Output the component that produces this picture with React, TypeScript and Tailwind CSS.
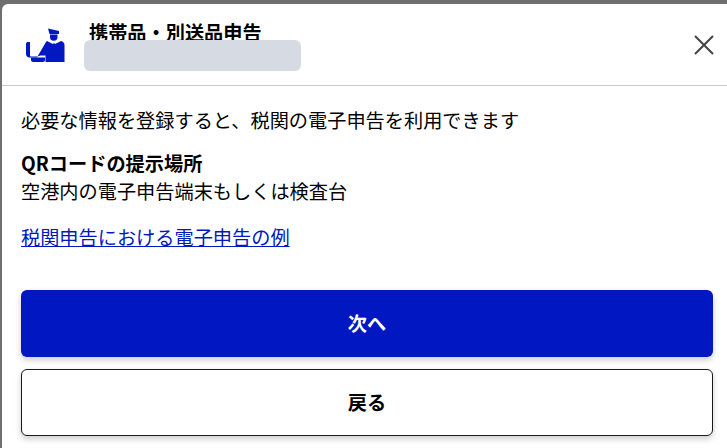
import { X } from 'lucide-react';

const OfficerIcon = () => (
  <svg width="40" height="34" viewBox="0 0 40 34" className="shrink-0" fill="#0017c1">
    <path d="M23 .5l11 2.500v3H24.500z" />
    <path d="M25 6.500h7.500v2.500a3.750 3.750 0 0 1-7.500 0z" />
    <path d="M22 13l6 3 1-1 1 1 6-3c2 .5 3.500 2 3.500 4v17H20.500v-6.500h-5l-3 1L21 14z" />
    <path d="M1 16c0-1 .500-2 1.500-2H5v13c0 1 .500 1.500 1.500 1.500H13L12 29.500H4.500C2.500 29.500 1 28 1 26z" />
    <path d="M6 29.500h14V32c0 1-1 2-2 2H8c-1 0-2-1-2-2z" />
  </svg>
);

export default function App() {
  return (
    <div className="h-[448px] overflow-hidden bg-[#6f6f6f] pl-[2px] pt-[4px] font-['Noto_Sans_CJK_JP','Noto_Sans',sans-serif] text-black">
      <div className="h-full rounded-tl-[6px] bg-white">
        {/* Header */}
        <header className="flex h-[82px] items-center border-b border-[#c8c8c8] pl-[23px] pr-[6px]">
          <OfficerIcon />
          <div className="ml-[24px] flex h-full flex-col pt-[15px]">
            <h1 className="h-[21px] text-[19.2px] font-bold leading-[27px]">携帯品・別送品申告</h1>
            <div className="relative -ml-[5px] h-[31px] w-[217px] rounded-[6px] bg-[#d6dae2]" />
          </div>
          <button className="ml-auto text-[#444444]">
            <X size={34} strokeWidth={1.4} />
          </button>
        </header>

        {/* Body */}
        <div className="px-[19px] pt-[20px]">
          <p className="text-[19.2px] leading-[28px]">必要な情報を登録すると、税関の電子申告を利用できます</p>
          <h2 className="mt-[15px] text-[19.2px] font-bold leading-[28px]">QRコードの提示場所</h2>
          <p className="text-[19.2px] leading-[28px]">空港内の電子申告端末もしくは検査台</p>
          <a href="#" className="mt-[18px] block text-[19.2px] leading-[28px] text-[#0017c1] underline">税関申告における電子申告の例</a>

          <button className="mt-[39px] h-[67px] w-[692px] rounded-[6px] bg-[#0017c1] text-[19.2px] font-bold text-white shadow-[0_3px_6px_rgba(0,0,0,0.2)]">次へ</button>
          <button className="mt-[12px] h-[67px] w-[692px] rounded-[6px] border border-[#1a1a1a] bg-white text-[19.2px] font-bold shadow-[0_3px_6px_rgba(0,0,0,0.2)]">戻る</button>
        </div>
      </div>
    </div>
  );
}
